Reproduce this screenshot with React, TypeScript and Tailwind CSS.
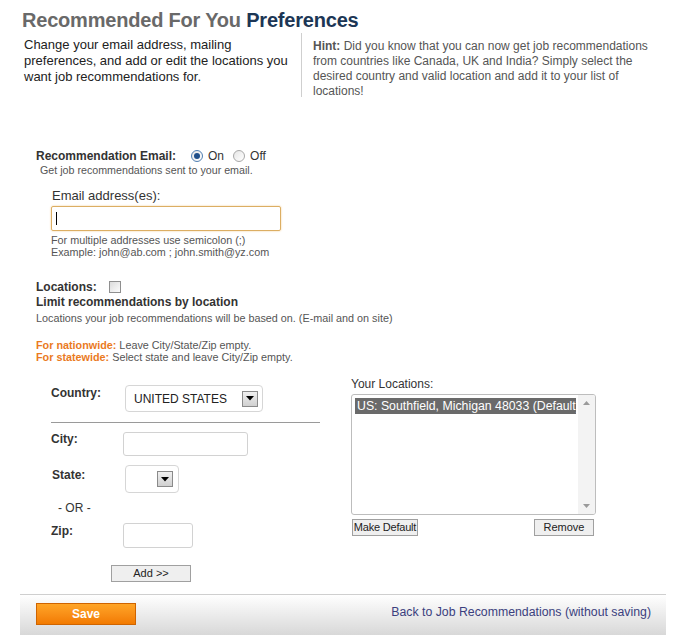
import React from "react";

function Radio({ checked, className = "" }: { checked?: boolean; className?: string }) {
  return (
    <span
      className={`inline-flex items-center justify-center w-[12px] h-[12px] rounded-full border ${
        checked ? "border-[#4f7fb3]" : "border-[#a8a8a8]"
      } bg-gradient-to-br from-[#e6e6e6] to-[#ffffff] ${className}`}
    >
      {checked && <span className="w-[6px] h-[6px] rounded-full bg-[#1f4f8a]" />}
    </span>
  );
}

function Arrow() {
  return (
    <span className="flex items-center justify-center w-[16px] h-[16px] border border-[#8a8a8a] bg-gradient-to-b from-[#f0f0f0] to-[#d0d0d0]">
      <svg width="8" height="5" viewBox="0 0 8 5">
        <path d="M0 0 H8 L4 4.5 Z" fill="#000" />
      </svg>
    </span>
  );
}

function Btn({ children, w, className = "" }: { children: React.ReactNode; w: string; className?: string }) {
  return (
    <div
      className={`flex items-center justify-center h-[17px] border border-[#a0a0a0] bg-[#efefef] text-[11px] leading-[15px] text-[#222] whitespace-nowrap ${w} ${className}`}
    >
      {children}
    </div>
  );
}

export default function App() {
  return (
    <div className="w-[681px] h-[643px] overflow-hidden bg-white font-['Liberation_Sans',Arial,sans-serif] text-[#222]">
      {/* Title */}
      <div className="pt-[8px] pl-[22px] text-[20px] leading-[24px] font-bold whitespace-nowrap tracking-[-0.2px]">
        <span className="text-[#696969]">Recommended For You </span>
        <span className="text-[#1c3655]">Preferences</span>
      </div>

      {/* Intro */}
      <div className="flex mt-[1px]">
        <div className="w-[301px] pl-[24px] pt-[4px] text-[13px] leading-[16px] text-[#222] whitespace-nowrap">
          Change your email address, mailing
          <br />
          preferences, and add or edit the locations you
          <br />
          want job recommendations for.
        </div>
        <div className="w-px h-[64px] bg-[#cfcfcf]" />
        <div className="pl-[11px] pt-[6px] text-[12px] leading-[15px] text-[#555] whitespace-nowrap">
          <span className="font-bold">Hint:</span> Did you know that you can now get job recommendations
          <br />
          from countries like Canada, UK and India? Simply select the
          <br />
          desired country and valid location and add it to your list of
          <br />
          locations!
        </div>
      </div>

      {/* Email section */}
      <div className="mt-[50px] pl-[36px]">
        <div className="flex items-center h-[14px] text-[12px] leading-[14px]">
          <span className="font-bold text-[#333]">Recommendation Email:</span>
          <Radio checked className="ml-[15px]" />
          <span className="ml-[5px] text-[#333]">On</span>
          <Radio className="ml-[9px]" />
          <span className="ml-[5px] text-[#333]">Off</span>
        </div>
        <div className="pl-[4px] text-[10.7px] leading-[14px] text-[#555]">
          Get job recommendations sent to your email.
        </div>

        <div className="ml-[15px] mt-[11px]">
          <div className="pl-[1px] text-[13px] leading-[16px] text-[#333]">Email address(es):</div>
          <div className="mt-[2px] w-[230px] h-[25px] rounded-[2px] border border-[#dcae63] shadow-[0_0_2px_#f0c98a] flex items-center pl-[4px]">
            <span className="w-px h-[13px] bg-black" />
          </div>
          <div className="mt-[3px] text-[10.8px] leading-[12px] text-[#555]">
            For multiple addresses use semicolon (;)
            <br />
            Example: john@ab.com ; john.smith@yz.com
          </div>
        </div>

        {/* Locations */}
        <div className="mt-[22px] flex items-center h-[14px] text-[12px] leading-[14px]">
          <span className="font-bold text-[#333]">Locations:</span>
          <span className="ml-[12px] w-[12px] h-[12px] border border-[#8f8f8f] bg-gradient-to-br from-[#dcdcdc] to-[#fbfbfb]" />
        </div>
        <div className="mt-[1px] text-[12px] leading-[14px] font-bold text-[#333]">
          Limit recommendations by location
        </div>
        <div className="mt-[2px] text-[10.8px] leading-[14px] text-[#555]">
          Locations your job recommendations will be based on. (E-mail and on site)
        </div>
        <div className="mt-[14px] text-[10.8px] leading-[12px] text-[#555]">
          <span className="font-bold text-[#ea7a1e]">For nationwide:</span> Leave City/State/Zip empty.
          <br />
          <span className="font-bold text-[#ea7a1e]">For statewide:</span> Select state and leave City/Zip empty.
        </div>
      </div>

      {/* Location editor */}
      <div className="flex mt-[14px]">
        <div className="w-[320px] pl-[51px] pt-[8px]">
          <div className="flex items-start">
            <div className="w-[74px] mt-[1px] text-[12px] leading-[14px] font-bold text-[#333]">Country:</div>
            <div className="flex items-center w-[138px] h-[27px] border border-[#d6d6d6] rounded-[4px] pl-[8px] pr-[4px]">
              <span className="flex-1 text-[12px] leading-[14px] text-[#222]">UNITED STATES</span>
              <Arrow />
            </div>
          </div>
          <div className="mt-[10px] h-px w-[269px] bg-[#9a9a9a]" />
          <div className="flex items-start mt-[9px]">
            <div className="w-[72px] text-[12px] leading-[14px] font-bold text-[#333]">City:</div>
            <div className="w-[125px] h-[24px] border border-[#d2d2d2] rounded-[3px]" />
          </div>
          <div className="flex items-start mt-[9px]">
            <div className="w-[74px] pl-[1px] mt-[3px] text-[12px] leading-[14px] font-bold text-[#333]">State:</div>
            <div className="flex items-center justify-end w-[54px] h-[28px] border border-[#d6d6d6] rounded-[4px] pr-[5px]">
              <Arrow />
            </div>
          </div>
          <div className="mt-[8px] pl-[7px] text-[12px] leading-[14px] text-[#333]">- OR -</div>
          <div className="flex items-start mt-[8px]">
            <div className="w-[72px] mt-[1px] text-[12px] leading-[14px] font-bold text-[#333]">Zip:</div>
            <div className="w-[70px] h-[25px] border border-[#d2d2d2] rounded-[3px]" />
          </div>
          <Btn w="w-[80px]" className="mt-[17px] ml-[60px] h-[16px]">
            Add &gt;&gt;
          </Btn>
        </div>

        <div className="ml-[31px]">
          <div className="text-[12px] leading-[14px] text-[#333]">Your Locations:</div>
          <div className="mt-[3px] w-[245px] h-[121px] border border-[#bdbdbd] rounded-[3px] flex overflow-hidden">
            <div className="w-[224px] pl-[3px] pt-[3px] overflow-hidden">
              <div className="h-[16px] bg-[#6a6a6a] text-white text-[12.3px] leading-[16px] pl-[2px] whitespace-nowrap overflow-hidden">
                US: Southfield, Michigan 48033 (Default)
              </div>
            </div>
            <div className="flex-1" />
            <div className="w-[17px] bg-[#f3f3f3] flex flex-col justify-between items-center py-[6px]">
              <svg width="7" height="4" viewBox="0 0 7 4">
                <path d="M0 4 L3.5 0 L7 4 Z" fill="#9a9a9a" />
              </svg>
              <svg width="7" height="4" viewBox="0 0 7 4">
                <path d="M0 0 L3.5 4 L7 0 Z" fill="#9a9a9a" />
              </svg>
            </div>
          </div>
          <div className="mt-[4px] flex justify-between w-[243px] pl-[1px]">
            <Btn w="w-[66px]" className="tracking-[-0.2px]">Make Default</Btn>
            <Btn w="w-[60px]">Remove</Btn>
          </div>
        </div>
      </div>

      {/* Footer */}
      <div className="mt-[12px] ml-[20px] w-[646px] h-[41px] border-t border-[#cfcfcf] bg-gradient-to-b from-[#ffffff] to-[#d8d8d8] flex items-start justify-between pl-[16px] pr-[15px] pt-[8px]">
        <div className="w-[100px] h-[22px] border border-[#cf6400] bg-gradient-to-b from-[#ffa526] to-[#f27a00] flex items-center justify-center text-white text-[12px] font-bold">
          Save
        </div>
        <div className="mt-[2px] text-[12.3px] leading-[14px] text-[#3b3f7e]">
          Back to Job Recommendations (without saving)
        </div>
      </div>
    </div>
  );
}
